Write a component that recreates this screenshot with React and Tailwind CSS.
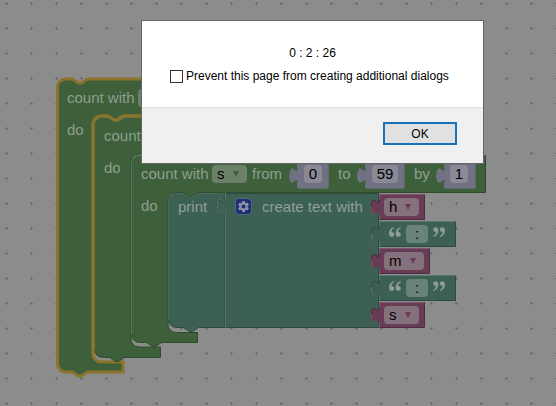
import React from 'react';

const GREEN = '#3d603b';
const TEAL = '#3c6054';
const PINK = '#673c54';
const LILAC = '#717184';
const GOLD = '#8c732a';

// C-shaped statement block: x/y is its corner, ix/iy the corner of its mouth.
function loopPath({ x, y, right, ix, iy, mouthBottom, armRight, bottom }) {
  return [
    `M ${x} ${y + 8} a 8 8 0 0 1 8 -8 H ${x + 15} l 6 4 h 3 l 6 -4 H ${right} V ${iy}`,
    `H ${ix + 30} l -6 4 h -3 l -6 -4 H ${ix + 8} a 8 8 0 0 0 -8 8 V ${mouthBottom - 8}`,
    `a 8 8 0 0 0 8 8 H ${armRight} V ${bottom}`,
    `H ${x + 30} l -6 4 h -3 l -6 -4 H ${x + 8} a 8 8 0 0 1 -8 -8 Z`,
  ].join(' ');
}

function valuePath(x, y, width, height) {
  return `M ${x} ${y} h ${width} v ${height} h ${-width} V ${y + 20} c 0 -10 -8 8 -8 -7.5 s 8 2.5 8 -7.5 Z`;
}

const LOOPS = [
  { x: 57.5, y: 79, right: 412, ix: 93, iy: 116, mouthBottom: 362, armRight: 123, bottom: 372 },
  { x: 94.5, y: 117.5, right: 449, ix: 131, iy: 154, mouthBottom: 347, armRight: 160.5, bottom: 357.5 },
  { x: 131.5, y: 155.5, right: 485.5, ix: 168, iy: 192.5, mouthBottom: 332.5, armRight: 197.5, bottom: 342.5 },
];

const VALUES = [
  { x: 298, y: 163, w: 30, h: 25, fill: LILAC, light: '#7a7a8c', dark: '#6a6a7c' },
  { x: 366, y: 163, w: 38, h: 25, fill: LILAC, light: '#7a7a8c', dark: '#6a6a7c' },
  { x: 445, y: 163, w: 30, h: 25, fill: LILAC, light: '#7a7a8c', dark: '#6a6a7c' },
  { x: 379.5, y: 194.5, w: 45, h: 25, fill: PINK, light: '#7c586c', dark: '#4d2c3f' },
  { x: 379.5, y: 221.5, w: 76, h: 25, fill: TEAL, light: '#5b786e', dark: '#2d4a40' },
  { x: 379.5, y: 248.5, w: 50, h: 25, fill: PINK, light: '#7c586c', dark: '#4d2c3f' },
  { x: 379.5, y: 275.5, w: 76, h: 25, fill: TEAL, light: '#5b786e', dark: '#2d4a40' },
  { x: 379.5, y: 302.5, w: 45, h: 25, fill: PINK, light: '#7c586c', dark: '#4d2c3f' },
];

function BlockShapes() {
  return (
    <svg className="absolute inset-0 h-full w-full" aria-hidden="true">
      <defs>
        <pattern id="grid" width="25" height="25" x="-6" y="-9" patternUnits="userSpaceOnUse">
          <path d="M 11 12.5 h 3 M 12.5 11 v 3" stroke="#6c6c6c" strokeWidth="1" />
        </pattern>
      </defs>
      <rect width="100%" height="100%" fill="url(#grid)" />
      {LOOPS.map((loop, i) => (
        <g key={loop.x}>
          <path
            d={loopPath(loop)}
            fill={GREEN}
            stroke={i === 0 ? GOLD : '#2f4d2e'}
            strokeWidth={i === 0 ? 3 : 1}
          />
          {i > 0 && (
            <path
              d={`M ${loop.x} ${loop.bottom - 8} V ${loop.y + 8} a 8 8 0 0 1 8 -8 h 7 l 6 4 h 3 l 6 -4 H ${loop.right}`}
              fill="none"
              stroke="#5a7759"
            />
          )}
          {i === 1 && (
            <path
              d="M 93 354 V 124 a 8 8 0 0 1 8 -8 h 7 l 6 4 h 3 l 6 -4 H 412"
              fill="none"
              stroke={GOLD}
              strokeWidth="3"
            />
          )}
        </g>
      ))}
      <path
        d="M 168.5 201.5 a 8 8 0 0 1 8 -8 h 7 l 6 4 h 3 l 6 -4 H 225 V 327.5 H 198.5 l -6 4 h -3 l -6 -4 h -7 a 8 8 0 0 1 -8 -8 Z"
        fill={TEAL}
        stroke="#2d4a40"
      />
      <path
        d="M 168.5 319.5 V 201.5 a 8 8 0 0 1 8 -8 h 7 l 6 4 h 3 l 6 -4 H 225"
        fill="none"
        stroke="#4c6b60"
      />
      <path d={valuePath(225.5, 193.5, 153, 134)} fill={TEAL} />
      <path d="M 225 327.5 H 378.5 V 193.5 H 225" fill="none" stroke="#2d4a40" />
      <path d="M 217 206 c 0 -12 7 1 7.5 -6" fill="none" stroke="#2d4a40" />
      <path d="M 225.5 193 v 5.5 c 0 10 -8 -8 -8 7.5 s 8 -2.5 8 7.5 V 328" fill="none" stroke="#55736a" />
      {VALUES.map((v) => (
        <g key={`${v.x}-${v.y}`}>
          <path d={valuePath(v.x, v.y, v.w, v.h)} fill={v.fill} stroke={v.fill} />
          <path
            d={`M ${v.x + v.w} ${v.y} v ${v.h} H ${v.x} M ${v.x} ${v.y + 5} c 0 10 -8 -8 -8 7.5`}
            fill="none"
            stroke={v.dark}
          />
          <path
            d={`M ${v.x + v.w} ${v.y} H ${v.x} v 5 M ${v.x - 8} ${v.y + 12} c 0 6 1 7.5 3 7 M ${v.x} ${v.y + 20} v ${v.h - 20}`}
            fill="none"
            stroke={v.light}
          />
        </g>
      ))}
    </svg>
  );
}

function Picker({ name, arrow, className }) {
  return (
    <span className={`flex h-[18px] items-center rounded ${className}`}>
      <select
        aria-label={`Variable ${name}`}
        className="h-full w-full appearance-none rounded bg-transparent pl-[5px] text-[15px] leading-[18px] text-black outline-none"
        defaultValue={name}
      >
        <option>{name}</option>
      </select>
      <svg className="pointer-events-none absolute right-2 top-1.5" width="6" height="6" viewBox="0 0 6 6" aria-hidden="true">
        <path d="M 0 0 H 6 L 3 6 Z" fill={arrow} />
      </svg>
    </span>
  );
}

function Entry({ value, label, className }) {
  return (
    <input
      type="text"
      aria-label={label}
      defaultValue={value}
      className={`h-[18px] rounded p-0 text-center text-[15px] leading-[18px] text-black outline-none ${className}`}
    />
  );
}

function QuoteMark({ closing = false }) {
  return (
    <svg width="12" height="10" viewBox="0 0 12 10" aria-hidden="true">
      <g transform={closing ? 'rotate(180 6 5)' : undefined} fill="#8d9e97">
        <path d="M 5 0 C 2 0.8 0 3.2 0 6.4 C 0 8.5 1 9.8 2.7 9.8 C 4.2 9.8 5.2 8.8 5.2 7.4 C 5.2 6 4.2 5.1 2.5 5.1 C 2.5 3.4 3.5 2 5.2 1.1 Z" />
        <path d="M 11.6 0 C 8.6 0.8 6.6 3.2 6.6 6.4 C 6.6 8.5 7.6 9.8 9.3 9.8 C 10.8 9.8 11.8 8.8 11.8 7.4 C 11.8 6 10.8 5.1 9.1 5.1 C 9.1 3.4 10.1 2 11.8 1.1 Z" />
      </g>
    </svg>
  );
}

function TextValue({ className }) {
  return (
    <div className={`absolute left-[389px] flex gap-[5px] pt-0.5 ${className}`}>
      <QuoteMark />
      <Entry value=":" label="Text" className="-mt-0.5 w-[22px] bg-[#69827a]" />
      <QuoteMark closing />
    </div>
  );
}

function Gear() {
  return (
    <button type="button" aria-label="Edit text inputs" className="h-[17px] w-[17px]">
      <svg width="17" height="17" viewBox="0 0 17 17" aria-hidden="true">
        <rect x="0.5" y="0.5" width="16" height="16" rx="3.5" fill="#202c75" stroke="#4c6a80" />
        <g fill="#8a91a5">
          <rect x="7" y="3" width="3" height="11" rx="0.5" />
          <rect x="7" y="3" width="3" height="11" rx="0.5" transform="rotate(60 8.5 8.5)" />
          <rect x="7" y="3" width="3" height="11" rx="0.5" transform="rotate(120 8.5 8.5)" />
          <circle cx="8.5" cy="8.5" r="4" />
        </g>
        <circle cx="8.5" cy="8.5" r="2" fill="#202c75" />
      </svg>
    </button>
  );
}

function Workspace() {
  return (
    <main className="absolute inset-0 overflow-hidden whitespace-nowrap text-[15px] leading-[18px] text-[#8f9f8e]">
      <BlockShapes />
      <div className="absolute left-[67px] top-[89px] flex gap-[3px]">
        <span>count with</span>
        <Picker name="h" arrow={GREEN} className="relative w-[35px] bg-[#6a8069]" />
      </div>
      <span className="absolute left-[67px] top-[121px]">do</span>
      <span className="absolute left-[104px] top-[127px]">count with</span>
      <span className="absolute left-[104px] top-[159px]">do</span>

      <div className="absolute left-[141px] top-[165px] flex">
        <span className="w-[71px]">count with</span>
        <Picker name="s" arrow={GREEN} className="relative w-[35px] bg-[#6a8069]" />
        <span className="w-[57px] pl-[5px]">from</span>
        <Entry value="0" label="From" className="w-[18px] bg-[#8a8a96]" />
        <span className="w-[50px] pl-4">to</span>
        <Entry value="59" label="To" className="w-[26px] bg-[#8a8a96]" />
        <span className="w-[52px] pl-4">by</span>
        <Entry value="1" label="By" className="w-[18px] bg-[#8a8a96]" />
      </div>
      <span className="absolute left-[141px] top-[197px]">do</span>

      <div className="absolute left-[178px] top-[198px] flex text-[#8f9f99]">
        <span className="w-[57px]">print</span>
        <Gear />
        <span className="pl-2.5">create text with</span>
      </div>

      <Picker name="h" arrow={PINK} className="absolute left-[384px] top-[198px] w-[35px] bg-[#85717c]" />
      <TextValue className="top-[225px]" />
      <Picker name="m" arrow={PINK} className="absolute left-[384px] top-[252px] w-[40px] bg-[#85717c]" />
      <TextValue className="top-[279px]" />
      <Picker name="s" arrow={PINK} className="absolute left-[384px] top-[306px] w-[35px] bg-[#85717c]" />
    </main>
  );
}

function AlertDialog() {
  return (
    <div
      role="alertdialog"
      aria-modal="true"
      aria-describedby="message"
      className="absolute left-[141px] top-5 w-[343px] border border-[#666] bg-white text-xs text-black"
    >
      <div className="flex flex-col gap-[7px] px-7 pb-[23px] pt-6">
        <p id="message" className="text-center leading-4">0 : 2 : 26</p>
        <label className="flex items-center gap-[3px] whitespace-nowrap leading-4">
          <input type="checkbox" className="h-[13px] w-[13px] appearance-none border border-[#333] bg-white" />
          Prevent this page from creating additional dialogs
        </label>
      </div>
      <div className="flex justify-end border-t border-[#dfdfdf] bg-[#f0f0f0] pb-[18px] pr-[26px] pt-3.5">
        <button
          type="button"
          className="h-[23px] w-[74px] border-2 border-[#1a72b8] bg-[#e1e1e1] text-xs leading-4 outline-none"
        >
          OK
        </button>
      </div>
    </div>
  );
}

export default function App() {
  return (
    <div className="relative min-h-screen bg-[#8c8c8c] font-['Liberation_Sans',Arial,sans-serif]">
      <Workspace />
      <AlertDialog />
    </div>
  );
}
